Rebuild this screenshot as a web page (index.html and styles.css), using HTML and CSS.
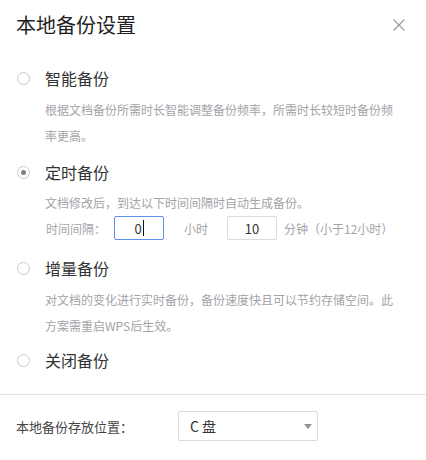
FILE: index.html
```html
<!DOCTYPE html>
<html lang="zh-CN">
<head>
<meta charset="utf-8">
<title>本地备份设置</title>
<link rel="stylesheet" href="styles.css">
</head>
<body>
<div class="dialog">
  <header class="head">
    <h1 class="title">本地备份设置</h1>
    <button class="close" aria-label="关闭">
      <svg width="12" height="12" viewBox="0 0 12 12"><path d="M0.5 0.5L11.5 11.5M11.5 0.5L0.5 11.5" stroke="#9a9aa6" stroke-width="1.2" fill="none"/></svg>
    </button>
  </header>
  <div class="options">
    <div class="opt opt-1">
      <div class="opt-head"><span class="radio"></span><span class="opt-title">智能备份</span></div>
      <p class="desc">根据文档备份所需时长智能调整备份频率，所需时长较短时备份频率更高。</p>
    </div>
    <div class="opt opt-2">
      <div class="opt-head"><span class="radio checked"></span><span class="opt-title">定时备份</span></div>
      <p class="desc desc-short">文档修改后，到达以下时间间隔时自动生成备份。</p>
      <div class="time-row">
        <span class="lbl">时间间隔：</span>
        <span class="num active">0<span class="caret"></span></span>
        <span class="unit">小时</span>
        <span class="num">10</span>
        <span class="unit-last">分钟（小于12小时）</span>
      </div>
    </div>
    <div class="opt opt-3">
      <div class="opt-head"><span class="radio"></span><span class="opt-title">增量备份</span></div>
      <p class="desc">对文档的变化进行实时备份，备份速度快且可以节约存储空间。此方案需重启WPS后生效。</p>
    </div>
    <div class="opt opt-4">
      <div class="opt-head"><span class="radio"></span><span class="opt-title">关闭备份</span></div>
    </div>
  </div>
  <div class="footer">
    <span class="foot-label">本地备份存放位置：</span>
    <div class="select"><span class="sel-text">C 盘</span><span class="arrow"></span></div>
  </div>
</div>
</body>
</html>
```
FILE: styles.css
```css
html, body {
  margin: 0;
  padding: 0;
  background: #fff;
}
body {
  width: 426px;
  height: 460px;
  overflow: hidden;
  font-family: "Noto Sans CJK SC", "Microsoft YaHei", "Noto Sans", sans-serif;
}
.dialog {
  width: 426px;
}
.head {
  height: 50px;
  box-sizing: border-box;
  padding: 0 21px 0 16px;
  display: flex;
  align-items: center;
  justify-content: space-between;
}
.title {
  margin: 0;
  font-size: 20px;
  font-weight: 400;
  line-height: 24px;
  color: #1f1f1f;
}
.close {
  width: 12px;
  height: 12px;
  padding: 0;
  border: 0;
  background: none;
  display: flex;
}
.options {
  padding: 16px 24px 0 17px;
}
.opt-2 { margin-top: 11px; }
.opt-3 { margin-top: 16px; }
.opt-4 { margin-top: 9px; }
.opt-head {
  display: flex;
  align-items: center;
  height: 24px;
}
.radio {
  width: 13px;
  height: 13px;
  box-sizing: border-box;
  border: 1px solid #c9c9cf;
  border-radius: 50%;
  margin-right: 15px;
  display: flex;
  align-items: center;
  justify-content: center;
  flex: none;
}
.radio.checked::after {
  content: "";
  width: 5px;
  height: 5px;
  border-radius: 50%;
  background: #7d7f88;
}
.opt-title {
  font-size: 16px;
  line-height: 24px;
  color: #333;
}
.desc {
  margin: 7px 0 0 28px;
  font-size: 12px;
  line-height: 26px;
  color: #a3a3a8;
}
.desc-short {
  margin-top: 6px;
}
.time-row {
  margin-left: 29px;
  height: 24px;
  display: flex;
  align-items: center;
  font-size: 12px;
  color: #a3a3a8;
}
.lbl {
  margin-right: 8px;
}
.num {
  width: 50px;
  height: 24px;
  box-sizing: border-box;
  border: 1px solid #dcdcdf;
  border-radius: 2px;
  display: flex;
  align-items: center;
  justify-content: center;
  font-size: 13px;
  color: #333;
}
.num.active {
  border-color: #5b8ff0;
}
.caret {
  width: 1px;
  height: 16px;
  background: #111;
  margin-left: 1px;
}
.unit {
  margin: 0 19px 0 20px;
}
.unit-last {
  margin-left: 7px;
}
.footer {
  margin-top: 22px;
  border-top: 1px solid #e2e2e6;
  padding: 16px 16px 0;
  display: flex;
  align-items: center;
}
.foot-label {
  width: 162px;
  font-size: 13px;
  color: #444;
}
.select {
  width: 140px;
  height: 30px;
  box-sizing: border-box;
  border: 1px solid #dcdcdf;
  border-radius: 2px;
  padding: 0 5px 0 11px;
  display: flex;
  align-items: center;
  justify-content: space-between;
}
.sel-text {
  font-size: 14px;
  color: #333;
}
.arrow {
  width: 0;
  height: 0;
  border-left: 4px solid transparent;
  border-right: 4px solid transparent;
  border-top: 5px solid #8e909a;
}
```
